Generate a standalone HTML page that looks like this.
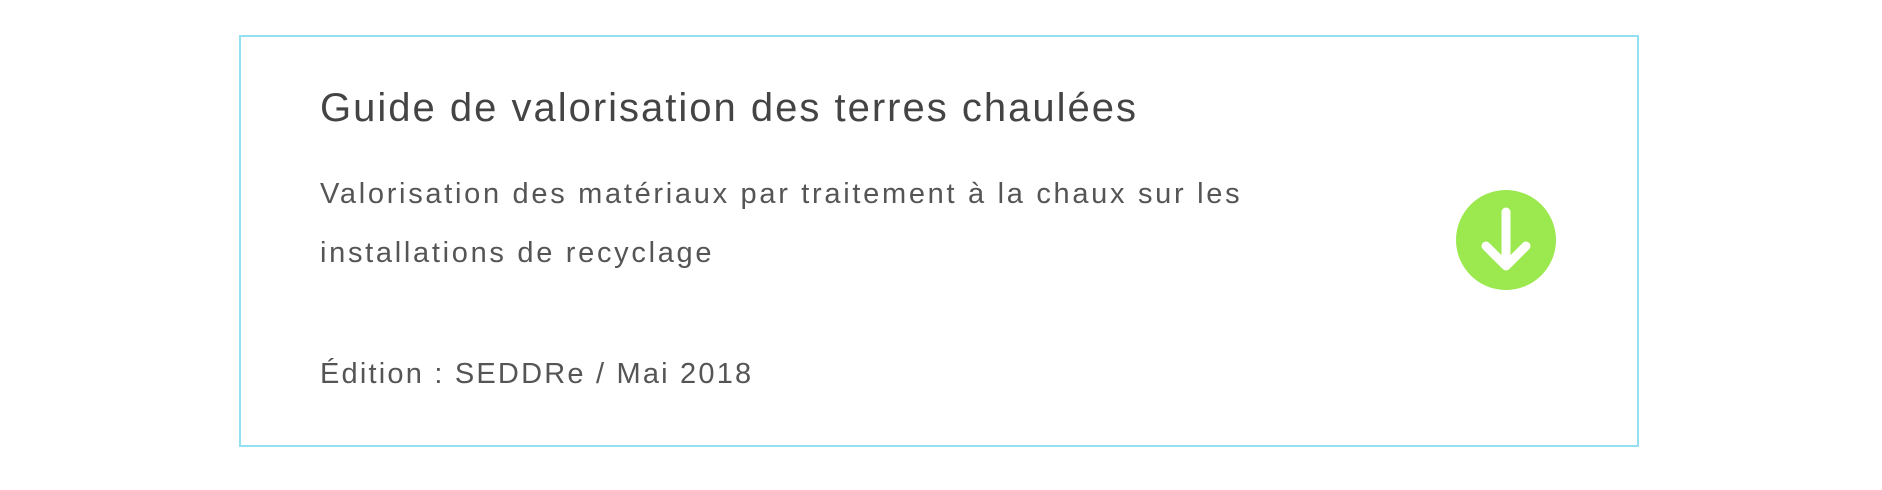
<!DOCTYPE html>
<html><head><meta charset="utf-8"><style>
html,body{margin:0;padding:0;background:#fff;width:1882px;height:490px;overflow:hidden}
body{font-family:"Liberation Sans",sans-serif;position:relative}
.box{position:absolute;left:239px;top:35px;width:1396px;height:408px;border:2px solid #94e0f2}
.t{position:absolute;left:320px;top:86px;font-size:40px;color:#444;white-space:nowrap;letter-spacing:2px}
.s{position:absolute;left:320px;top:165px;font-size:29px;line-height:59px;color:#555;width:1200px;letter-spacing:2.7px}
.e{position:absolute;left:320px;top:358px;font-size:29px;color:#555;white-space:nowrap;letter-spacing:2.2px}
.ic{position:absolute;left:1456px;top:190px}
</style></head><body>
<div class="box"></div>
<div class="t">Guide de valorisation des terres chaulées</div>
<div class="s">Valorisation des matériaux par traitement à la chaux sur les<br>installations de recyclage</div>
<div class="e">Édition : SEDDRe / Mai 2018</div>
<svg class="ic" width="100" height="100" viewBox="0 0 100 100">
<circle cx="50" cy="50" r="50" fill="#9be84f"/>
<path d="M50 22 V74 M30 56 L50 76 L70 56" stroke="#fff" stroke-width="9" fill="none" stroke-linecap="round" stroke-linejoin="round"/>
</svg>
</body></html>
